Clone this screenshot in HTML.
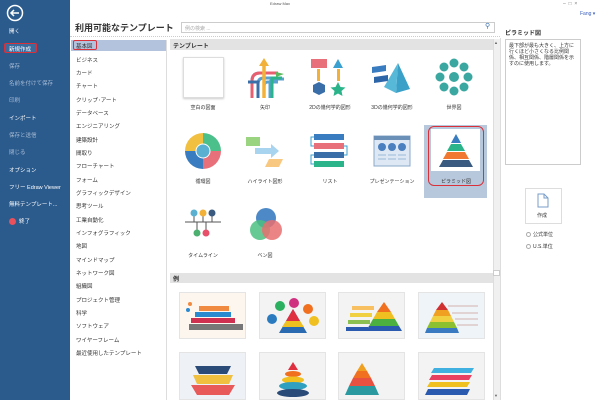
<!DOCTYPE html><html><head><meta charset="utf-8"><style>
*{margin:0;padding:0;box-sizing:border-box}
body{width:600px;height:400px;overflow:hidden;background:#fff;font-family:"Liberation Sans","Noto Sans CJK JP",sans-serif;position:relative}
.a{position:absolute;white-space:nowrap}
.side{left:0;top:0;width:70px;height:400px;background:#2b5a8c}
.si{left:9px;font-size:5.5px;color:#fff}
.dim{color:#a9bed6}
.cat{left:76px;font-size:5.5px;color:#333}
.lbl{font-size:5px;color:#333;transform:translateX(-50%)}
.th{background:#f3f3f3;border:1px solid #e4e4e4}
</style></head><body>
<div class="a side"></div>
<svg class="a" style="left:6px;top:4px" width="18" height="18"><circle cx="9" cy="9" r="7.5" fill="none" stroke="#fff" stroke-width="1.5"/><path d="M13 9H5M8 6L5 9l3 3" stroke="#fff" stroke-width="1.5" fill="none"/></svg>
<div class="a si" style="top:27px">開く</div>
<div class="a" style="left:4px;top:43px;width:33px;height:10px;border:1.5px solid #d9303a;border-radius:2px;background:#3c6c9e"></div>
<div class="a si" style="top:45px">新規作成</div>
<div class="a si dim" style="top:62px">保存</div>
<div class="a si dim" style="top:79px">名前を付けて保存</div>
<div class="a si dim" style="top:96px">印刷</div>
<div class="a si" style="top:114px">インポート</div>
<div class="a si dim" style="top:131px">保存と送信</div>
<div class="a si dim" style="top:148px">閉じる</div>
<div class="a si" style="top:166px">オプション</div>
<div class="a si" style="top:183px">フリー Edraw Viewer</div>
<div class="a si" style="top:200px">無料テンプレート...</div>
<div class="a" style="left:9px;top:218px;width:7px;height:7px;border-radius:50%;background:#e8505b"></div>
<div class="a si" style="left:19px;top:217px">終了</div>

<div class="a" style="left:270px;top:1px;font-size:4px;color:#555">Edraw Max</div>
<div class="a" style="left:563px;top:1px;font-size:5px;color:#777">–&nbsp;&nbsp;□&nbsp;&nbsp;×</div>
<div class="a" style="left:580px;top:11px;font-size:5px;color:#3b5fc0">Fang ▾</div>

<div class="a" style="left:75px;top:21px;font-size:9px;font-weight:bold;color:#333">利用可能なテンプレート</div>
<div class="a" style="left:181px;top:22px;width:314px;height:11px;border:1px solid #ccc;font-size:5px;color:#aaa;padding:2px 3px">例の検索 ...</div>
<div class="a" style="left:485px;top:22px;font-size:7px;color:#3b6fb0">⚲</div>
<div class="a" style="left:70px;top:36px;width:430px;border-top:1px dotted #ccc"></div>

<div class="a" style="left:71px;top:40px;width:95px;height:11px;background:#b4c3dd"></div>
<div class="a" style="left:73px;top:40px;width:24px;height:10px;border:1.3px solid #d9303a;border-radius:2px"></div>
<div class="a" style="left:166px;top:40px;width:1px;height:360px;background:#ddd"></div>
<div class="a cat" style="top:42px">基本図</div>
<div class="a cat" style="top:56px">ビジネス</div>
<div class="a cat" style="top:69px">カード</div>
<div class="a cat" style="top:82px">チャート</div>
<div class="a cat" style="top:96px">クリップ･アート</div>
<div class="a cat" style="top:109px">データベース</div>
<div class="a cat" style="top:122px">エンジニアリング</div>
<div class="a cat" style="top:136px">建築設計</div>
<div class="a cat" style="top:149px">間取り</div>
<div class="a cat" style="top:162px">フローチャート</div>
<div class="a cat" style="top:176px">フォーム</div>
<div class="a cat" style="top:189px">グラフィックデザイン</div>
<div class="a cat" style="top:202px">思考ツール</div>
<div class="a cat" style="top:216px">工業自動化</div>
<div class="a cat" style="top:229px">インフォグラフィック</div>
<div class="a cat" style="top:242px">地図</div>
<div class="a cat" style="top:256px">マインドマップ</div>
<div class="a cat" style="top:269px">ネットワーク図</div>
<div class="a cat" style="top:282px">組織図</div>
<div class="a cat" style="top:296px">プロジェクト管理</div>
<div class="a cat" style="top:309px">科学</div>
<div class="a cat" style="top:322px">ソフトウェア</div>
<div class="a cat" style="top:336px">ワイヤーフレーム</div>
<div class="a cat" style="top:349px">最近使用したテンプレート</div>

<div class="a" style="left:170px;top:39px;width:323px;height:11px;background:#e3e3e3;font-size:6px;font-weight:bold;color:#333;padding:2px 3px">テンプレート</div>
<div class="a" style="left:493px;top:39px;width:7px;height:361px;background:#f0f0f0;border-left:1px solid #ddd"></div>
<div class="a" style="left:494px;top:40px;font-size:4px;color:#666">▲</div>
<div class="a" style="left:494px;top:393px;font-size:4px;color:#666">▼</div>
<div class="a" style="left:493px;top:270px;width:7px;height:6px;background:#fff;border:1px solid #ccc"></div>

<div class="a" style="left:183px;top:57px;width:41px;height:41px;background:#fff;border:1px solid #ddd;box-shadow:0 1px 2px #ccc"></div>
<svg class="a" style="left:244px;top:56px" width="42" height="42"><path d="M8 42V25q0-8 8-8h18M14 42V28q0-6 6-6h16M20 42V30q0-4 4-4h10M26 42V28q0-5 5-5h9" fill="none" stroke-width="3" stroke="#5aa0d0"/><path d="M8 42V25q0-8 8-8h18" stroke="#e86070" stroke-width="3" fill="none"/><path d="M20 42V10" stroke="#f2b23a" stroke-width="3.5"/><path d="M15 10l5-8 5 8z" fill="#f2b23a"/><path d="M14 42V26h-10" stroke="#3a6ea8" stroke-width="3" fill="none"/><path d="M28 42V22h10" stroke="#2bb48a" stroke-width="3" fill="none"/><path d="M32 16l8 2-8 3z" fill="#5cb85c"/></svg>
<svg class="a" style="left:308px;top:57px" width="40" height="40"><rect x="3" y="2" width="16" height="9" fill="#e8707a"/><rect x="9" y="12" width="3" height="12" fill="#f2b23a"/><path d="M11 25l6 3v7l-6 3-6-3v-7z" fill="#3a6ea8"/><path d="M30 2l5 9h-10z" fill="#3aa0d0"/><rect x="29" y="12" width="3" height="12" fill="#f2b23a"/><path d="M30 25l2.5 5 5 .5-4 3.5 1 5-4.5-2.5-4.5 2.5 1-5-4-3.5 5-.5z" fill="#2bb48a"/></svg>
<svg class="a" style="left:370px;top:59px" width="42" height="36"><path d="M2 8l14-2v6l-14 2z" fill="#3a7cc0"/><path d="M4 18l14-2v6l-14 2z" fill="#2c66a8"/><path d="M28 4l12 26-14 4z" fill="#3aa0c8"/><path d="M28 4l-14 24 12 6z" fill="#58b8d8"/></svg>
<svg class="a" style="left:435px;top:58px" width="38" height="38"><g fill="#3aa8a0"><circle cx="19" cy="19" r="5"/><circle cx="19" cy="5" r="4.5"/><circle cx="19" cy="33" r="4.5"/><circle cx="5" cy="19" r="4.5"/><circle cx="33" cy="19" r="4.5"/><circle cx="9" cy="9" r="4.5"/><circle cx="29" cy="9" r="4.5"/><circle cx="9" cy="29" r="4.5"/><circle cx="29" cy="29" r="4.5"/></g></svg>
<div class="a lbl" style="left:203px;top:104px">空白の図面</div>
<div class="a lbl" style="left:265px;top:104px">矢印</div>
<div class="a lbl" style="left:330px;top:104px">2Dの幾何学的図形</div>
<div class="a lbl" style="left:392px;top:104px">3Dの幾何学的図形</div>
<div class="a lbl" style="left:454px;top:104px">世界図</div>

<svg class="a" style="left:184px;top:132px" width="38" height="38"><path d="M19 19V1A18 18 0 0 1 37 19z" fill="#4cc08a"/><path d="M19 19h18A18 18 0 0 1 19 37z" fill="#e8707a"/><path d="M19 19v18A18 18 0 0 1 1 19z" fill="#3a7cc0"/><path d="M19 19H1A18 18 0 0 1 19 1z" fill="#f2c040"/><circle cx="19" cy="19" r="7" fill="#5ab0d0" stroke="#fff"/></svg>
<svg class="a" style="left:243px;top:135px" width="44" height="34"><rect x="3" y="2" width="14" height="9" fill="#9ad480"/><path d="M12 13h16v-4l8 7-8 7v-4h-16z" fill="#a8d4f0"/><path d="M26 24h14l-4 8h-14z" fill="#f8c880"/></svg>
<svg class="a" style="left:308px;top:133px" width="40" height="36"><rect x="6" y="1" width="30" height="6" fill="#3a7cc0"/><rect x="6" y="10" width="30" height="6" fill="#e8707a"/><rect x="6" y="19" width="30" height="6" fill="#3a6ea8"/><rect x="6" y="28" width="30" height="6" fill="#2bb48a"/><path d="M6 4h-3v9h3M36 13h3v9h-3M6 22h-3v9h3" stroke="#3aa0d0" fill="none"/></svg>
<svg class="a" style="left:373px;top:135px" width="38" height="32"><rect x="1" y="1" width="36" height="30" fill="#dde8f4" stroke="#8aa8c8"/><rect x="1" y="1" width="36" height="4" fill="#6a90b8"/><circle cx="9" cy="12" r="4" fill="#4a80c0"/><circle cx="19" cy="12" r="4" fill="#4a80c0"/><circle cx="29" cy="12" r="4" fill="#4a80c0"/><path d="M5 20h8M15 20h8M25 20h8M5 24h8M15 24h8M25 24h8" stroke="#9ab8d8"/></svg>
<div class="a" style="left:424px;top:125px;width:63px;height:73px;background:#b8c8dc"></div>
<div class="a" style="left:431px;top:129px;width:49px;height:42px;background:#fff"></div>
<div class="a" style="left:428px;top:126px;width:56px;height:60px;border:1.5px solid #d9303a;border-radius:6px"></div>
<svg class="a" style="left:436px;top:133px" width="40" height="34"><path d="M20 1l5 9h-10z" fill="#3a7cc0"/><path d="M15 11h10l4 7h-18z" fill="#2bb48a"/><path d="M11 19h18l4 7h-26z" fill="#f07830"/><path d="M7 27h26l4 7h-34z" fill="#3a5a80"/></svg>
<div class="a lbl" style="left:203px;top:178px">循環図</div>
<div class="a lbl" style="left:265px;top:178px">ハイライト図形</div>
<div class="a lbl" style="left:330px;top:178px">リスト</div>
<div class="a lbl" style="left:392px;top:178px">プレゼンテーション</div>
<div class="a lbl" style="left:456px;top:178px">ピラミッド図</div>

<svg class="a" style="left:184px;top:208px" width="38" height="34"><path d="M1 14h36" stroke="#555"/><path d="M10 6v8M19 6v8M28 6v8M13 14v9M22 14v9" stroke="#555"/><circle cx="10" cy="5" r="3.5" fill="#5ab0d0"/><circle cx="19" cy="5" r="3.5" fill="#f2b23a"/><circle cx="28" cy="5" r="3.5" fill="#3a5a80"/><circle cx="13" cy="25" r="3.5" fill="#4cb070"/><circle cx="22" cy="25" r="3.5" fill="#e8506a"/></svg>
<svg class="a" style="left:246px;top:206px" width="40" height="40"><circle cx="20" cy="12" r="10" fill="#3a7cc0" opacity=".9"/><circle cx="14" cy="24" r="10" fill="#4cc080" opacity=".85"/><circle cx="26" cy="24" r="10" fill="#e87070" opacity=".85"/></svg>
<div class="a lbl" style="left:203px;top:252px">タイムライン</div>
<div class="a lbl" style="left:265px;top:252px">ベン図</div>

<div class="a" style="left:170px;top:273px;width:323px;height:10px;background:#e3e3e3;font-size:6px;font-weight:bold;color:#333;padding:1px 3px">例</div>

<div class="a th" style="left:179px;top:292px;width:67px;height:47px;background:#fdf6ee"></div>
<svg class="a" style="left:185px;top:300px" width="60" height="36"><rect x="14" y="6" width="30" height="5" fill="#f08a40"/><rect x="10" y="12" width="36" height="5" fill="#2a8ad0"/><rect x="6" y="18" width="44" height="5" fill="#d03050"/><rect x="4" y="24" width="54" height="6" fill="#777"/><circle cx="5" cy="4" r="2" fill="#f08a40"/><circle cx="3" cy="10" r="2" fill="#2a8ad0"/></svg>
<div class="a th" style="left:259px;top:292px;width:67px;height:47px"></div>
<svg class="a" style="left:262px;top:295px" width="62" height="42"><circle cx="18" cy="11" r="5" fill="#2bb060"/><circle cx="32" cy="8" r="5" fill="#d03080"/><circle cx="46" cy="14" r="5" fill="#f07020"/><circle cx="10" cy="24" r="5" fill="#2a7ac0"/><circle cx="52" cy="26" r="5" fill="#f0c020"/><path d="M31 14l-14 24h28z" fill="#2a6ab0"/><path d="M31 14l-7 12h14z" fill="#e03040"/><path d="M24 26l-4 6h22l-4-6z" fill="#f0c020"/></svg>
<div class="a th" style="left:338px;top:292px;width:67px;height:47px"></div>
<svg class="a" style="left:342px;top:300px" width="60" height="36"><path d="M42 2l-7 10h14z" fill="#f07020"/><path d="M35 12l-4 7h22l-4-7z" fill="#f0c020"/><path d="M31 19l-4 7h30l-4-7z" fill="#4cb040"/><path d="M27 26l-3 5h36l-3-5z" fill="#2a5ab0"/><rect x="10" y="6" width="22" height="4" fill="#f8c060"/><rect x="8" y="13" width="22" height="4" fill="#f0d040"/><rect x="6" y="20" width="22" height="4" fill="#8cc050"/><rect x="4" y="27" width="22" height="4" fill="#2a5ab0"/></svg>
<div class="a th" style="left:418px;top:292px;width:67px;height:47px;background:#eef4f8"></div>
<svg class="a" style="left:422px;top:300px" width="60" height="36"><path d="M20 2l-6 8h12z" fill="#d03030"/><path d="M14 10l-3 6h18l-3-6z" fill="#f0a020"/><path d="M11 16l-3 6h24l-3-6z" fill="#f0d040"/><path d="M8 22l-3 6h30l-3-6z" fill="#8cc030"/><path d="M5 28l-2 5h34l-2-5z" fill="#3a7ac0"/><path d="M26 6h30M30 13h26M33 19h23M35 25h21" stroke="#c99" stroke-width=".7"/></svg>

<div class="a th" style="left:179px;top:352px;width:67px;height:48px;background:#eef2f6"></div>
<svg class="a" style="left:185px;top:362px" width="56" height="38"><path d="M10 4h36l-4 8h-28z" fill="#2a4a78"/><path d="M8 13h40l-4 9h-32z" fill="#f0c040"/><path d="M6 23h44l-6 10h-32z" fill="#e85a5a"/></svg>
<div class="a th" style="left:259px;top:352px;width:67px;height:48px"></div>
<svg class="a" style="left:270px;top:360px" width="46" height="40"><path d="M23 2l-5 8h10z" fill="#e03040"/><ellipse cx="23" cy="14" rx="8" ry="3" fill="#f07020"/><ellipse cx="23" cy="20" rx="11" ry="3.5" fill="#f0c020"/><ellipse cx="23" cy="26" rx="14" ry="4" fill="#30a0c0"/><ellipse cx="23" cy="33" rx="16" ry="4" fill="#2a4a78"/></svg>
<div class="a th" style="left:338px;top:352px;width:67px;height:48px"></div>
<svg class="a" style="left:345px;top:362px" width="50" height="38"><path d="M17 1l-5 8h10z" fill="#f0a020"/><path d="M12 9l-4 7h18l-4-7z" fill="#f07020"/><path d="M8 16l-4 8h26l-4-8z" fill="#e85040"/><path d="M4 24l-4 9h34l-4-9z" fill="#2a9aa0"/></svg>
<div class="a th" style="left:418px;top:352px;width:67px;height:48px"></div>
<svg class="a" style="left:422px;top:362px" width="60" height="36"><path d="M12 6h40l-3 5h-40z" fill="#40b0e0"/><path d="M10 13h40l-3 5h-40z" fill="#e84060"/><path d="M8 20h40l-3 5h-40z" fill="#f0c020"/><path d="M6 27h42l-3 6h-42z" fill="#2a5ab0"/></svg>

<div class="a" style="left:500px;top:38px;width:1px;height:362px;background:#ddd"></div>
<div class="a" style="left:505px;top:28px;font-size:6px;font-weight:bold;color:#333">ピラミッド図</div>
<div class="a" style="left:505px;top:39px;width:76px;height:126px;border:1px solid #ccc;font-size:5px;color:#333;padding:3px;white-space:normal;line-height:6px">最下部が最も大きく、上方に行くほど小さくなる比例関係、相互関係、階層関係を示すのに使用します。</div>
<div class="a" style="left:525px;top:188px;width:37px;height:36px;border:1px solid #ddd;background:#fff"></div>
<svg class="a" style="left:537px;top:193px" width="12" height="15"><path d="M1 1h6l4 4v9H1z M7 1v4h4" fill="none" stroke="#7a9cc8"/></svg>
<div class="a" style="left:537px;top:212px;font-size:5px;color:#333">作成</div>
<div class="a" style="left:526px;top:232px;width:5px;height:5px;border:1px solid #aaa;border-radius:50%"></div>
<div class="a" style="left:533px;top:231px;font-size:5px;color:#333">公式単位</div>
<div class="a" style="left:526px;top:244px;width:5px;height:5px;border:1px solid #aaa;border-radius:50%"></div>
<div class="a" style="left:533px;top:243px;font-size:5px;color:#333">U.S.単位</div>
</body></html>
